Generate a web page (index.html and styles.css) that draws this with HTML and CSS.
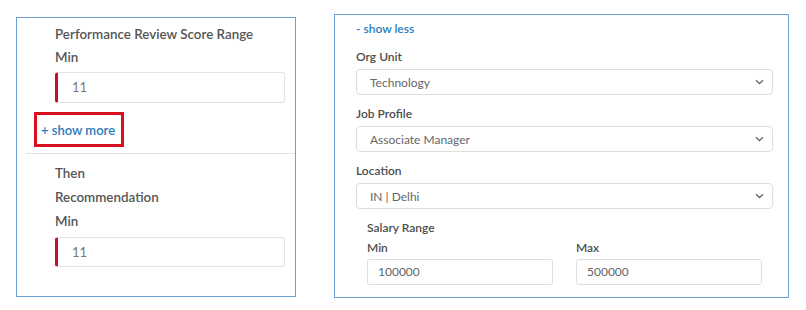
FILE: index.html
```html
<!DOCTYPE html>
<html lang="en">
<head>
  <meta charset="UTF-8" />
  <title>Rule Editor</title>
  <link rel="stylesheet" href="styles.css">
</head>
<body>
  <div class="page">
    <!-- Rule card (collapsed) -->
    <div class="card card-rule">
      <div class="block">
        <div class="label">Performance Review Score Range</div>
        <div class="label">Min</div>
        <div class="field field-required">11</div>
        <div class="toggle-box">
          <span class="toggle">+ show more</span>
        </div>
      </div>
      <div class="divider"></div>
      <div class="block block-then">
        <div class="label">Then</div>
        <div class="label">Recommendation</div>
        <div class="label">Min</div>
        <div class="field field-required field-short">11</div>
      </div>
    </div>

    <!-- Rule card (expanded) -->
    <div class="card card-filters">
      <span class="toggle toggle-small">- show less</span>

      <div class="group">
        <div class="small-label">Org Unit</div>
        <div class="select">
          <span>Technology</span>
          <svg width="9" height="6" viewBox="0 0 9 6"><path d="M1 1.2 L4.5 4.5 L8 1.2" fill="none" stroke="#666" stroke-width="1.3"/></svg>
        </div>
      </div>

      <div class="group">
        <div class="small-label">Job Profile</div>
        <div class="select">
          <span>Associate Manager</span>
          <svg width="9" height="6" viewBox="0 0 9 6"><path d="M1 1.2 L4.5 4.5 L8 1.2" fill="none" stroke="#666" stroke-width="1.3"/></svg>
        </div>
      </div>

      <div class="group">
        <div class="small-label">Location</div>
        <div class="select">
          <span>IN | Delhi</span>
          <svg width="9" height="6" viewBox="0 0 9 6"><path d="M1 1.2 L4.5 4.5 L8 1.2" fill="none" stroke="#666" stroke-width="1.3"/></svg>
        </div>
      </div>

      <div class="salary">
        <div class="small-label">Salary Range</div>
        <div class="range">
          <div>
            <div class="small-label">Min</div>
            <div class="text-input">100000</div>
          </div>
          <div>
            <div class="small-label">Max</div>
            <div class="text-input">500000</div>
          </div>
        </div>
      </div>
    </div>
  </div>
</body>
</html>
```

FILE: styles.css
```css
body {
  margin: 0;
  background-color: #ffffff;
  font-family: 'Lato', 'Liberation Sans', sans-serif;
  color: #555555;
}

.page {
  display: flex;
  align-items: flex-start;
  gap: 38px;
  padding-left: 16px;
}

.card {
  box-sizing: border-box;
  border: 1px solid #6f9fd2;
  background-color: #ffffff;
}

/* left card */
.card-rule {
  margin-top: 17px;
  width: 280px;
  height: 280px;
}

.block {
  padding: 5px 10px 0 38px;
}

.label {
  font-size: 13.4px;
  font-weight: 600;
  line-height: 23px;
  color: #555555;
}

.block-then {
  padding-top: 7px;
}

.block-then .label {
  line-height: 24px;
}

.field {
  box-sizing: border-box;
  height: 31px;
  margin-top: 3px;
  padding-left: 14px;
  border: 1px solid #e2e2e2;
  border-radius: 3px;
  font-size: 13px;
  line-height: 29px;
  color: #777777;
}

.field-required {
  border-left: 3px solid #c8101e;
}

.field-short {
  height: 30px;
  margin-top: 4px;
  line-height: 28px;
}

.toggle-box {
  box-sizing: border-box;
  width: 90px;
  height: 35px;
  margin: 9px 0 0 -21px;
  padding-left: 4px;
  border: 3px solid #d9101f;
  display: flex;
  align-items: center;
}

.toggle {
  font-size: 13px;
  font-weight: 600;
  color: #2d7bbd;
}

.divider {
  height: 1px;
  margin: 6px 0 0 9px;
  background-color: #e3e3e3;
}

/* right card */
.card-filters {
  margin-top: 14px;
  width: 455px;
  height: 284px;
  padding: 5px 15px 0 21px;
}

.toggle-small {
  display: block;
  font-size: 12px;
  line-height: 18px;
}

.group {
  margin-top: 10px;
}

.small-label {
  font-size: 12px;
  font-weight: 600;
  line-height: 18px;
  color: #4d4d4d;
}

.select {
  box-sizing: border-box;
  height: 26px;
  margin-top: 3px;
  padding: 0 8px 0 13px;
  border: 1px solid #dedede;
  border-radius: 4px;
  display: flex;
  align-items: center;
  justify-content: space-between;
  font-size: 12px;
  color: #666666;
}

.salary {
  margin-top: 10px;
  padding: 0 11px;
}

.range {
  display: grid;
  grid-template-columns: 1fr 1fr;
  gap: 23px;
  margin-top: 2px;
}

.text-input {
  box-sizing: border-box;
  height: 26px;
  margin-top: 2px;
  padding-left: 10px;
  border: 1px solid #dedede;
  border-radius: 3px;
  font-size: 12px;
  line-height: 24px;
  color: #666666;
}
```
